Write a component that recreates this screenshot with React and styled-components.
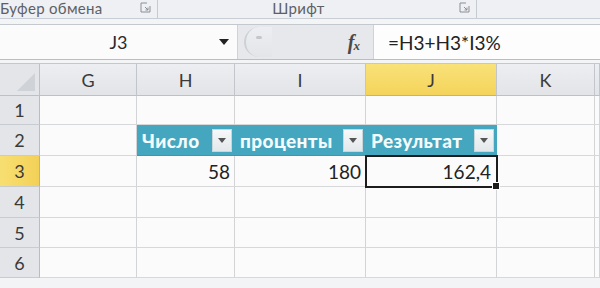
import React from 'react'
import styled, { createGlobalStyle } from 'styled-components'

const GlobalStyle = createGlobalStyle`
  html, body { margin: 0; padding: 0; }
  body { font-family: Lato, "Liberation Sans", sans-serif; background: #f4f5f7; }
`

const Page = styled.div`
  width: 600px;
  height: 288px;
  overflow: hidden;
  background: #f3f4f6;
  display: flex;
  flex-direction: column;
`

const Ribbon = styled.div`
  height: 18px;
  display: flex;
  background: #eef0f3;
  border-bottom: 1px solid #c9ced5;
`

const Group = styled.div`
  width: ${({ w }) => w}px;
  display: flex;
  align-items: center;
  border-right: 1px solid #c6cbd2;
  padding-right: 6px;
  box-sizing: border-box;
`

const GroupLabel = styled.span`
  font-size: 15px;
  line-height: 16px;
  color: #5d6066;
  margin-top: -3px;
  padding-right: ${({ shift }) => shift || 0}px;
  letter-spacing: 0.3px;
  flex: 1;
  text-align: ${({ center }) => (center ? 'center' : 'left')};
`

const Launcher = styled.svg`
  width: 11px;
  height: 11px;
  flex: none;
  margin-top: -3px;
`

const FormulaRow = styled.div`
  margin-top: 5px;
  height: 34px;
  display: flex;
  border-top: 1px solid #c4c9d0;
  border-bottom: 1px solid #b9bec6;
  background: #e9ebee;
`

const NameBox = styled.div`
  width: 238px;
  background: #fbfbfb;
  display: flex;
  align-items: center;
  border-right: 1px solid #cfd3d8;
  box-sizing: border-box;
`

const NameText = styled.span`
  flex: 1;
  text-align: center;
  font-size: 18px;
  color: #2a2a2a;
  padding-left: 18px;
`

const Arrow = styled.span`
  width: 0;
  height: 0;
  border-left: 5px solid transparent;
  border-right: 5px solid transparent;
  border-top: 6px solid #222;
  margin-right: 8px;
`

const Grip = styled.div`
  flex: 1;
  display: flex;
  align-items: center;
  background: #e6e8eb;
  padding-left: 6px;
`

const GripKnob = styled.div`
  width: 26px;
  height: 30px;
  border-radius: 15px 0 0 15px;
  border-left: 2px solid #cdd1d6;
  background: linear-gradient(#eceef1, #e3e5e8);
  position: relative;
  &::after {
    content: '';
    position: absolute;
    left: 10px;
    top: 9px;
    width: 6px;
    height: 3px;
    border-radius: 2px;
    background: #c3c7cc;
  }
`

const Fx = styled.span`
  margin-left: auto;
  margin-right: 14px;
  font-family: "Liberation Serif", serif;
  font-style: italic;
  font-weight: bold;
  font-size: 20px;
  color: #4a4a4a;
  letter-spacing: -1px;
  sub {
    font-size: 13px;
    vertical-align: -1px;
  }
`

const Formula = styled.div`
  width: 227px;
  background: #fdfdfd;
  border-left: 1px solid #cfd3d8;
  display: flex;
  align-items: center;
  padding-left: 14px;
  box-sizing: border-box;
  font-size: 19px;
  color: #222;
`

const Sheet = styled.div`
  margin-top: 3px;
  display: grid;
  grid-template-columns: 40px 97px 98px 131px 131px 98px 1fr;
  grid-template-rows: 32px 29px 31px 31px 31px 30px 30px;
  border-top: 1px solid #c3c8cf;
`

const Corner = styled.div`
  background: #e3e5e8;
  border-right: 1px solid #bcc1c8;
  border-bottom: 1px solid #bcc1c8;
  position: relative;
  &::after {
    content: '';
    position: absolute;
    right: 4px;
    bottom: 4px;
    border-left: 18px solid transparent;
    border-bottom: 18px solid #cfd2d6;
  }
`

const ColHead = styled.div`
  background: ${({ active }) =>
    active ? 'linear-gradient(#f9e27a, #f4d35a)' : 'linear-gradient(#eceef1, #e2e4e8)'};
  border-right: 1px solid #c2c6cc;
  border-bottom: 1px solid ${({ active }) => (active ? '#d9b43a' : '#bcc1c8')};
  display: flex;
  align-items: center;
  justify-content: center;
  font-size: 18px;
  color: #3a3a3a;
`

const RowHead = styled.div`
  background: ${({ active }) =>
    active ? 'linear-gradient(90deg, #f8df72, #f3d158)' : '#e3e5e8'};
  border-right: 1px solid ${({ active }) => (active ? '#d9b43a' : '#b8bdc4')};
  border-bottom: 1px solid #c8ccd1;
  display: flex;
  align-items: center;
  justify-content: center;
  font-size: 18px;
  color: #3a3a3a;
`

const Cell = styled.div`
  background: #fbfbfb;
  border-right: 1px solid #d2d4d6;
  border-bottom: 1px solid #d6d8da;
  display: flex;
  align-items: center;
  justify-content: flex-end;
  padding-right: 4px;
  font-size: 19px;
  color: #222;
  position: relative;
`

const TableHead = styled.div`
  background: #45a6bf;
  border-bottom: 1px solid #3d97ae;
  display: flex;
  align-items: center;
  padding: 0 3px 0 5px;
  font-size: 19px;
  font-weight: 900;
  color: #f4fbfd;
  letter-spacing: 0.4px;
  white-space: nowrap;
`

const HeadText = styled.span`
  flex: 1;
  overflow: hidden;
`

const FilterButton = styled.div`
  width: 18px;
  height: 21px;
  flex: none;
  background: linear-gradient(#f6f8f9, #e4e8ea);
  border: 1px solid #c9d6da;
  display: flex;
  align-items: center;
  justify-content: center;
  &::after {
    content: '';
    border-left: 4px solid transparent;
    border-right: 4px solid transparent;
    border-top: 5px solid #555;
  }
`

const Selected = styled(Cell)`
  outline: 2px solid #1c1c1c;
  outline-offset: -1px;
  z-index: 1;
  padding-right: 5px;
`

const FillHandle = styled.span`
  position: absolute;
  right: -4px;
  bottom: -4px;
  width: 6px;
  height: 6px;
  background: #1c1c1c;
  border: 1px solid #fff;
`

const cols = ['G', 'H', 'I', 'J', 'K']

const renderRow = (r) => {
  if (r === 2) {
    return [
      <Cell key="g" />,
      <TableHead key="h"><HeadText>Число</HeadText><FilterButton /></TableHead>,
      <TableHead key="i"><HeadText>проценты</HeadText><FilterButton /></TableHead>,
      <TableHead key="j"><HeadText>Результат</HeadText><FilterButton /></TableHead>,
      <Cell key="k" />,
      <Cell key="l" />,
    ]
  }
  if (r === 3) {
    return [
      <Cell key="g" />,
      <Cell key="h">58</Cell>,
      <Cell key="i">180</Cell>,
      <Selected key="j">162,4<FillHandle /></Selected>,
      <Cell key="k" />,
      <Cell key="l" />,
    ]
  }
  return [...cols, 'L'].map((c) => <Cell key={c} />)
}

const LaunchIcon = () => (
  <Launcher viewBox="0 0 11 11">
    <path d="M1 1h6M1 1v9h9V4" fill="none" stroke="#8a8f96" strokeWidth="1" />
    <path d="M5 5l3 3M8 5.5V8H5.5" fill="none" stroke="#8a8f96" strokeWidth="1" />
  </Launcher>
)

const App = () => {
  return (
    <Page>
      <GlobalStyle />
      <Ribbon>
        <Group w={158}>
          <GroupLabel>Буфер обмена</GroupLabel>
          <LaunchIcon />
        </Group>
        <Group w={319}>
          <GroupLabel center shift={20}>Шрифт</GroupLabel>
          <LaunchIcon />
        </Group>
      </Ribbon>
      <FormulaRow>
        <NameBox>
          <NameText>J3</NameText>
          <Arrow />
        </NameBox>
        <Grip>
          <GripKnob />
          <Fx>f<sub>x</sub></Fx>
        </Grip>
        <Formula>=H3+H3*I3%</Formula>
      </FormulaRow>
      <Sheet>
        <Corner />
        {cols.map((c) => (
          <ColHead key={c} active={c === 'J'}>{c}</ColHead>
        ))}
        <ColHead />
        {[1, 2, 3, 4, 5, 6].map((r) => (
          <React.Fragment key={r}>
            <RowHead active={r === 3}>{r}</RowHead>
            {renderRow(r)}
          </React.Fragment>
        ))}
      </Sheet>
    </Page>
  )
}

export default App
